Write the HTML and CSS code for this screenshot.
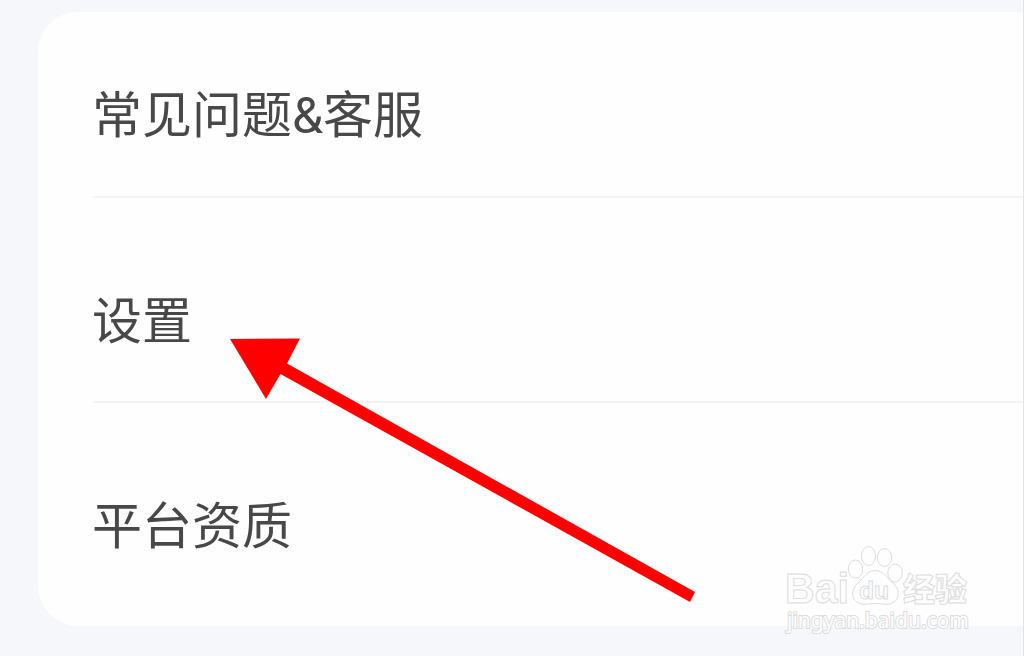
FILE: index.html
```
<!DOCTYPE html>
<html lang="zh-CN">

<head>
    <meta charset="UTF-8">
    <title>设置</title>
    <link rel="stylesheet" href="styles.css">
</head>

<body>

    <div class="menu">
        <div class="menu-item">常见问题&amp;客服</div>
        <div class="menu-item">设置</div>
        <div class="menu-item">平台资质</div>
    </div>

    <svg class="arrow" viewBox="0 0 1024 656">
        <polygon points="230,339 300,338.500 287,363.500 695,592 690,602 280.500,374 266,399"/>
    </svg>

    <svg class="watermark" viewBox="0 0 200 100">
        <g class="logo">
            <text class="logo-text" x="3" y="63" textLength="64" lengthAdjust="spacingAndGlyphs">Bai</text>
            <ellipse cx="73.500" cy="29" rx="7.200" ry="9"/>
            <ellipse cx="86.500" cy="16" rx="7" ry="9.500"/>
            <ellipse cx="102.500" cy="17.500" rx="7.200" ry="9"/>
            <ellipse cx="113" cy="33" rx="7.200" ry="9"/>
            <path d="M93 30.500C101 30.500 104 37 111 43C119 50 118 61 108 64C103 65 99 63.500 93 63.500C87 63.500 84 65 79 64C69 61 68 50 76 43C83 37 85 30.500 93 30.500Z"/>
            <text class="logo-du" x="77" y="59" textLength="30" lengthAdjust="spacingAndGlyphs">du</text>
            <text class="logo-cn" x="121" y="61" textLength="64" lengthAdjust="spacingAndGlyphs">经验</text>
        </g>
        <text class="site" x="5" y="88" textLength="182" lengthAdjust="spacingAndGlyphs">jingyan.baidu.com</text>
    </svg>

</body>

</html>
```
FILE: styles.css
```
body {
    font-family: Roboto, "Noto Sans CJK SC", sans-serif;
    margin: 0;
    height: 656px;
    padding: 12px 0 0 38px;
    box-sizing: border-box;
    background: #f5f7fb;
    overflow: hidden;
    border-right: 1px solid #e4e5e8;
}

.menu {
    height: 614px;
    padding-left: 55px;
    box-sizing: border-box;
    background: #fefefe;
    border-radius: 40px 0 0 40px;
}

.menu-item {
    height: 205px;
    padding-top: 66px;
    box-sizing: border-box;
    border-bottom: 2px solid #f3f3f3;
    color: #484848;
    font-size: 50px;
    line-height: 76px;
    text-indent: -1px;
}

.menu-item:first-child {
    height: 186px;
}

.menu-item:nth-child(2) {
    padding-top: 86px;
}

.menu-item:last-child {
    padding-top: 86px;
    border-bottom: none;
}

.arrow {
    position: absolute;
    left: 0;
    top: 0;
    width: 1024px;
    height: 656px;
    fill: #fe0000;
}

.watermark {
    position: absolute;
    left: 782px;
    top: 540px;
    width: 200px;
    height: 100px;
    fill: #fefefe;
    stroke: #dcdcdc;
    stroke-width: 1;
}

.logo-text {
    font: bold 42px "Liberation Sans", sans-serif;
}

.logo-du {
    font: bold 24px "Liberation Sans", sans-serif;
}

.logo-cn {
    font: 900 32px "Noto Sans CJK SC", sans-serif;
}

.site {
    font: 21px "Noto Sans", sans-serif;
    paint-order: stroke;
    stroke-width: 2;
}
```
